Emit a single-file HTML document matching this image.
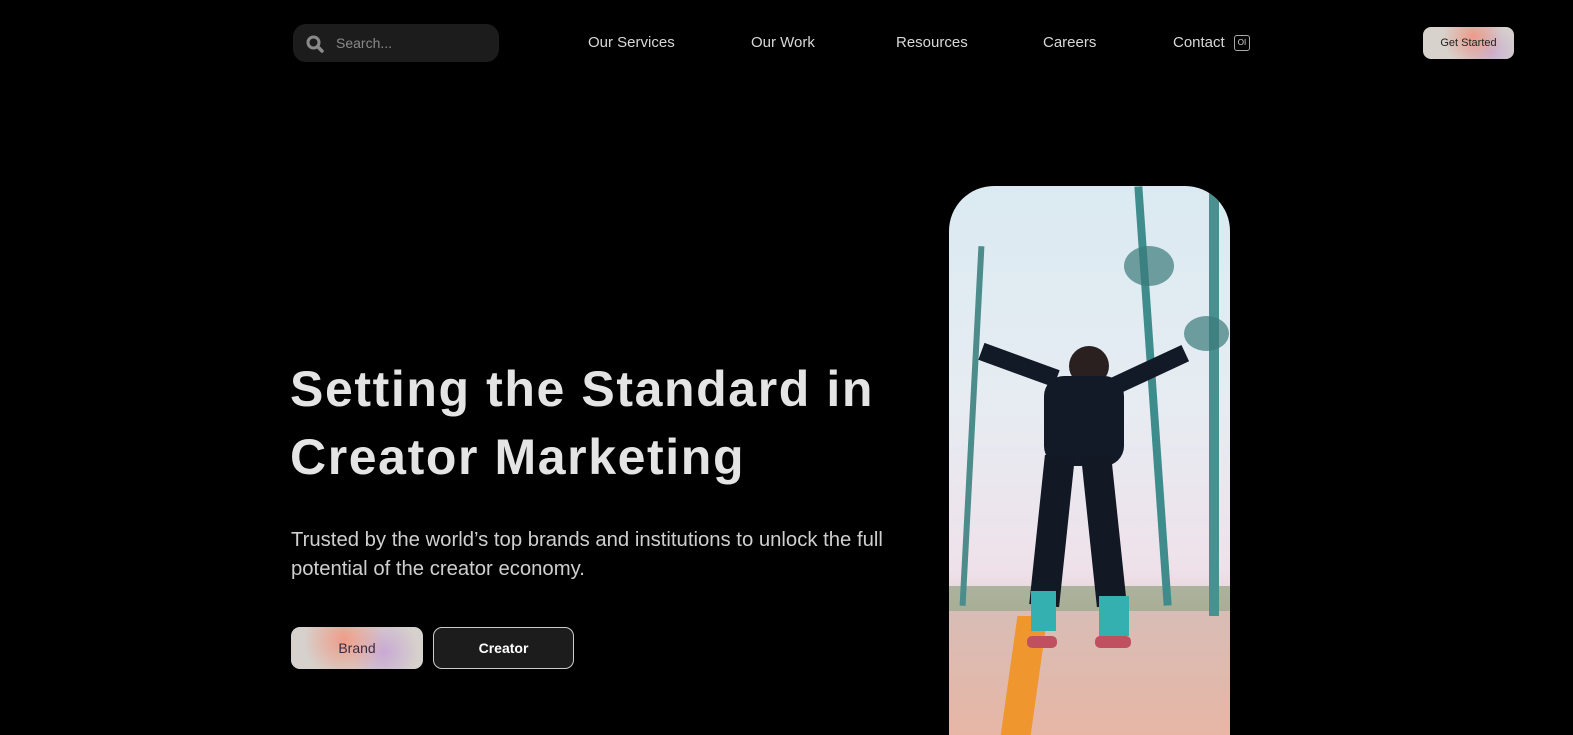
<!DOCTYPE html>
<html><head><meta charset="utf-8"><style>
*{margin:0;padding:0;box-sizing:border-box}
body{width:1573px;height:735px;background:#000;overflow:hidden;position:relative;font-family:"Liberation Sans",sans-serif;color:#ddd}
.search{position:absolute;left:293px;top:24px;width:206px;height:38px;background:#1c1c1c;border-radius:13px}
.search span{position:absolute;left:43px;top:11px;font-size:14px;color:#8a8a8a}
.nav{position:absolute;top:34px;font-size:15px;color:#d8d8d8}
.gs{position:absolute;left:1423px;top:27px;width:91px;height:32px;border-radius:8px;font-size:11px;color:#222;text-align:center;line-height:32px;
background:radial-gradient(ellipse 30px 30px at 55% 30%,#ec9a8a,transparent),radial-gradient(ellipse 30px 30px at 75% 80%,#c9b0d2,transparent),#d7d2cc}
h1{position:absolute;left:290px;top:355px;font-size:50px;line-height:68px;letter-spacing:1.6px;color:#e4e4e4;font-weight:bold}
p{position:absolute;left:291px;top:526px;font-size:20.3px;line-height:29px;color:#cfcfcf;width:620px}
.b1{position:absolute;left:291px;top:627px;width:132px;height:42px;border-radius:9px;text-align:center;line-height:42px;font-size:14px;color:#3a2a40;
background:radial-gradient(ellipse 40px 40px at 40% 30%,#ef9c88,transparent),radial-gradient(ellipse 35px 35px at 70% 60%,#c9a9d4,transparent),#d6d1cc}
.b2{position:absolute;left:433px;top:627px;width:141px;height:42px;border-radius:9px;border:1px solid #ccc;background:#1c1c1c;text-align:center;line-height:40px;font-size:14px;color:#fff;font-weight:bold}
.img{position:absolute;left:949px;top:186px;width:281px;height:549px;border-radius:45px 45px 0 0;overflow:hidden;
background:linear-gradient(#dbeaf2 0%,#e6ecf2 40%,#efe1ea 70%,#dcc8c2 82%,#e3b8ac 100%)}
.img div{position:absolute}
</style></head><body>
<div class="search"><svg style="position:absolute;left:13px;top:11px" width="18" height="18" viewBox="0 0 18 18"><circle cx="7.5" cy="7.5" r="5.5" fill="none" stroke="#8a8a8a" stroke-width="3"/><path d="M11.5 11.5L16 16" stroke="#8a8a8a" stroke-width="3.5" stroke-linecap="round"/></svg><span>Search...</span></div>
<div class="nav" style="left:588px">Our Services</div>
<div class="nav" style="left:751px">Our Work</div>
<div class="nav" style="left:896px">Resources</div>
<div class="nav" style="left:1043px">Careers</div>
<div class="nav" style="left:1173px">Contact</div>
<div style="position:absolute;left:1234px;top:35px;width:16px;height:16px;border:1px solid #aaa;border-radius:3px;font-size:8px;line-height:14px;text-align:center;color:#ddd">OI</div>
<div class="gs">Get Started</div>
<h1>Setting the Standard in<br>Creator Marketing</h1>
<p>Trusted by the world’s top brands and institutions to unlock the full potential of the creator economy.</p>
<div class="b1">Brand</div>
<div class="b2">Creator</div>
<div class="img">
<div style="left:0;top:400px;width:281px;height:30px;background:#6f8a5a;opacity:.5"></div>
<div style="left:0;top:425px;width:281px;height:124px;background:linear-gradient(#d8bdb6,#e7b6a5)"></div>
<div style="left:60px;top:430px;width:30px;height:120px;background:#f0962e;transform:skewX(-8deg)"></div>
<div style="left:200px;top:0;width:8px;height:420px;background:#3f8c8c;transform:rotate(-4deg)"></div>
<div style="left:260px;top:0;width:10px;height:430px;background:#4a9090"></div>
<div style="left:20px;top:60px;width:6px;height:360px;background:#4c8c8a;transform:rotate(3deg)"></div>
<div style="left:175px;top:60px;width:50px;height:40px;background:#3a7a7a;border-radius:50%;opacity:.7"></div>
<div style="left:235px;top:130px;width:45px;height:35px;background:#3a7a7a;border-radius:50%;opacity:.7"></div>
<div style="left:120px;top:160px;width:40px;height:40px;background:#2a2020;border-radius:50%"></div>
<div style="left:95px;top:190px;width:80px;height:90px;background:#111a26;border-radius:20px"></div>
<div style="left:30px;top:170px;width:80px;height:18px;background:#111a26;transform:rotate(20deg)"></div>
<div style="left:160px;top:175px;width:80px;height:18px;background:#111a26;transform:rotate(-25deg)"></div>
<div style="left:88px;top:270px;width:30px;height:150px;background:#121824;transform:rotate(6deg)"></div>
<div style="left:140px;top:270px;width:30px;height:150px;background:#121824;transform:rotate(-6deg)"></div>
<div style="left:82px;top:405px;width:25px;height:40px;background:#35b0b0"></div>
<div style="left:150px;top:410px;width:30px;height:40px;background:#35b0b0"></div>
<div style="left:78px;top:450px;width:30px;height:12px;background:#c05060;border-radius:5px"></div>
<div style="left:146px;top:450px;width:36px;height:12px;background:#c05060;border-radius:5px"></div>
</div>
</body></html>
